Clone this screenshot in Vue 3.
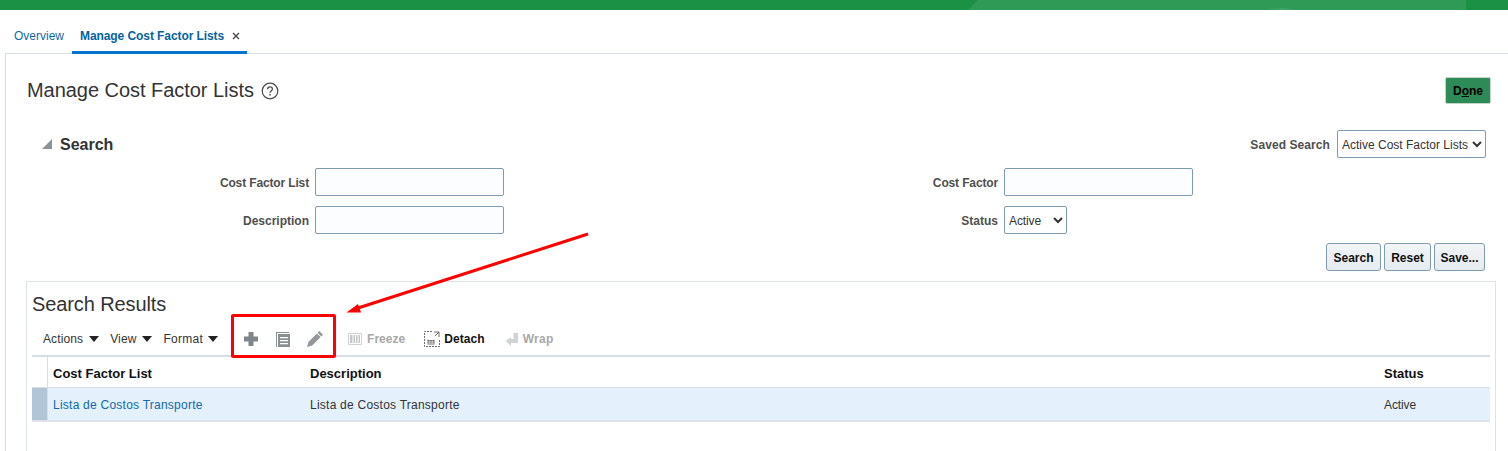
<script setup>
const columns = [
  { label: 'Cost Factor List', cls: 'c1' },
  { label: 'Description', cls: 'c2' },
  { label: 'Status', cls: 'c3' },
]
</script>

<template>
  <div class="page">
    <header class="brand">
      <div class="swoosh"></div>
      <div class="swoosh2"></div>
    </header>
    <nav class="tabs">
      <a class="tab">Overview</a>
      <a class="tab active">Manage Cost Factor Lists<svg class="close" width="8" height="8" viewBox="0 0 8 8"><path d="M1 1l6 6M7 1L1 7" stroke="#444" stroke-width="1.300" fill="none" /></svg></a>
    </nav>
    <main class="panel">
      <div class="title-row">
        <h1>Manage Cost Factor Lists</h1>
        <svg class="help" width="18" height="18" viewBox="0 0 18 18">
          <circle cx="9" cy="9" r="7.800" fill="none" stroke="#4a4a4a" stroke-width="1.200" />
          <path d="M6.600 7.200c0-1.500 1.100-2.300 2.400-2.300s2.400.8 2.400 2.100c0 1.900-2.400 1.900-2.400 3.800" fill="none" stroke="#4a4a4a" stroke-width="1.300" />
          <rect x="8.300" y="12" width="1.400" height="1.500" fill="#4a4a4a" />
        </svg>
        <button class="done">D<u>o</u>ne</button>
      </div>

      <div class="search-head">
        <div class="disclose-wrap">
          <svg class="disclose" width="12" height="12" viewBox="0 0 12 12"><path d="M11 1v10H1z" fill="#8d9296" /></svg>
          <h2>Search</h2>
        </div>
        <div class="saved">
          <label class="wide">Saved Search</label>
          <select class="sel saved-sel"><option>Active Cost Factor Lists</option></select>
        </div>
      </div>

      <div class="form">
        <label class="tight">Cost Factor List</label>
        <input class="inp" />
        <label class="tight">Cost Factor</label>
        <input class="inp" />
        <label>Description</label>
        <input class="inp" />
        <label>Status</label>
        <select class="sel status-sel"><option>Active</option></select>
      </div>

      <div class="actions">
        <button class="btn b-search">Search</button>
        <button class="btn b-reset">Reset</button>
        <button class="btn b-save">Save...</button>
      </div>

      <section class="results">
        <h2 class="results-title">Search Results</h2>
        <div class="toolbar">
          <span class="menu">Actions <i class="tri"></i></span>
          <span class="menu">View <i class="tri"></i></span>
          <span class="menu m-format">Format <i class="tri"></i></span>
          <span class="icons">
            <svg class="i-add" width="14" height="14" viewBox="0 0 14 14"><path d="M4.500 0h5v4.500H14v5H9.500V14h-5V9.500H0v-5h4.500z" fill="#7f8588" /></svg>
            <svg class="i-copy" width="14" height="15" viewBox="0 0 14 15">
              <path d="M0 0h13v1H1v14H0z" fill="#8a8f92" />
              <path d="M2 2h12v13H2z" fill="#8a8f92" />
              <path d="M4 5h8v1.300H4zM4 8h8v1.300H4zM4 11h8v1.300H4z" fill="#fff" />
            </svg>
            <svg class="i-edit" width="16" height="16" viewBox="0 0 16 16">
              <path d="M12.300 0L16 3.700l-1.700 1.700-3.700-3.700zM9.900 2.400l3.700 3.700-8.300 8.300L0 16l1.600-5.300z" fill="#93989b" />
            </svg>
          </span>
          <span class="tool off t-freeze">
            <svg width="14" height="14" viewBox="0 0 14 14">
              <path d="M.5 1.500h13v11H.5z" fill="none" stroke="#cfd2d4" />
              <path d="M2 3h2.500v8H2zM5.500 3H7v8H5.500zM8 3h1.500v8H8zM10.500 3H12v8h-1.500z" fill="#c4c7c9" />
            </svg>
            Freeze
          </span>
          <span class="tool t-detach">
            <svg width="16" height="16" viewBox="0 0 16 16">
              <path d="M8 .5H.5v15h15V8" fill="none" stroke="#6b6b6b" stroke-dasharray="2 1" />
              <path d="M10 1h5v5M15 1l-4 4" fill="none" stroke="#6b6b6b" />
              <path d="M3.500 9h7v4.500h-7z" fill="#5a5a5a" />
              <path d="M3.500 10.800h7M3.500 12.200h7M5.800 9v4.500M8.200 9v4.500" stroke="#fff" stroke-width=".6" />
            </svg>
            Detach
          </span>
          <span class="tool off t-wrap">
            <svg width="13" height="14" viewBox="0 0 13 14"><path d="M8.500 1H13v10H6v3L.5 9 6 5v2h2.500z" fill="#d0d3d5" /></svg>
            Wrap
          </span>
        </div>

        <div class="table">
          <div class="row head">
            <div class="rh"></div>
            <div v-for="c in columns" :key="c.label" class="cell" :class="c.cls">{{ c.label }}</div>
          </div>
          <div class="row body">
            <div class="rh"></div>
            <div class="cell c1"><a>Lista de Costos Transporte</a></div>
            <div class="cell c2">Lista de Costos Transporte</div>
            <div class="cell c3 plain">Active</div>
          </div>
        </div>
      </section>
    </main>

    <div class="red-box"></div>
    <svg class="arrow" width="250" height="85" viewBox="0 0 250 85">
      <path d="M243 2L13 76" stroke="#ff0000" stroke-width="3" fill="none" />
      <path d="M1.500 80.500L13 72l3 8.500z" fill="#ff0000" />
    </svg>
  </div>
</template>

<style>
html, body { margin: 0; background: #fff; overflow: hidden; }
</style>

<style scoped>
.page { position: relative; width: 1508px; height: 451px; overflow: hidden; font-family: "Liberation Sans", Arial, sans-serif; font-size: 12px; color: #333; background: #fff; }
.brand { position: relative; height: 10px; background: #1a9145; overflow: hidden; }
.swoosh { position: absolute; left: 968px; top: 0; width: 498px; height: 10px; background: #2f9a56; clip-path: polygon(10px 0, 100% 0, 100% 100%, 0 100%); }
.swoosh2 { position: absolute; left: 1262px; top: 8px; width: 38px; height: 12px; background: #3ca363; border-radius: 50%; }
.tabs { display: flex; height: 43px; position: relative; z-index: 1; padding-left: 6px; box-sizing: border-box; }
.tab { display: flex; align-items: center; padding: 15px 8px 8px; color: #0f6aa8; font-size: 12px; box-sizing: border-box; height: 44px; }
.tab.active { width: 175px; font-weight: bold; color: #04639f; border-bottom: 3px solid #0572ce; padding-bottom: 5px; letter-spacing: -.08px; white-space: nowrap; }
.close { margin-left: 8px; flex: none; }
.panel { margin-left: 5px; height: 398px; border-left: 1px solid #d6dfe6; border-top: 1px solid #d6dfe6; box-sizing: border-box; }
.title-row { display: flex; align-items: center; height: 73px; padding-left: 21px; padding-right: 17px; }
h1 { margin: 0; font-size: 20px; font-weight: normal; color: #333; letter-spacing: -.04px; }
.help { margin-left: 7px; }
.done { margin-left: auto; width: 46px; height: 27px; padding: 1px 0 0; background: #2e8b57; border: 1px solid #c5d5c9; border-radius: 2px; font: bold 12px "Liberation Sans", Arial, sans-serif; color: #000; }
.search-head { display: flex; justify-content: space-between; align-items: center; height: 30px; padding-left: 35px; padding-right: 22px; margin-top: 2px; margin-bottom: 9px; }
.disclose-wrap { display: flex; align-items: center; gap: 7px; margin-top: 2px; }
.disclose { margin-top: -2px; }
.search-head h2 { margin: 0; font-size: 16px; font-weight: bold; color: #333; }
.saved { display: flex; align-items: center; gap: 7px; }
label { font-weight: bold; color: #4f4f4f; font-size: 12px; text-align: right; padding-top: 1px; }
label.tight { letter-spacing: -.14px; }
label.wide { letter-spacing: .08px; }
.sel { height: 28px; box-sizing: border-box; background: #fff; border: 1px solid #7f9bae; border-radius: 2px; padding: 1px 0 0; font: 12px "Liberation Sans", Arial, sans-serif; color: #333; }
.saved-sel { width: 149px; }
.status-sel { width: 63px; letter-spacing: -.1px; }
.form { display: grid; grid-template-columns: 303px 189px 488px 189px; column-gap: 6px; row-gap: 10px; align-items: center; }
.inp { width: 189px; height: 28px; box-sizing: border-box; background: #fbfdff; border: 1px solid #7f9bae; border-radius: 2px; padding: 0; }
.actions { display: flex; justify-content: flex-end; gap: 3px; padding-right: 23px; margin-top: 9px; }
.btn { height: 28px; padding: 1px 0 0; background: linear-gradient(#f3f5f7, #e6ebef); border: 1px solid #7f9bae; border-radius: 3px; font: bold 12px "Liberation Sans", Arial, sans-serif; color: #111; }
.b-search { width: 55px; }
.b-reset { width: 47px; }
.b-save { width: 51px; }
.results { margin-left: 20px; margin-top: 10px; width: 1470px; height: 180px; border: 1px solid #dde3e8; border-bottom: 0; box-sizing: border-box; padding-left: 5px; padding-right: 5px; }
.results-title { margin: 0; padding-top: 11px; height: 33px; box-sizing: border-box; font-size: 20px; line-height: 22px; font-weight: normal; color: #333; letter-spacing: -.1px; }
.toolbar { display: flex; align-items: center; height: 40px; padding: 8px 0 0 11px; box-sizing: border-box; }
.menu { display: inline-flex; align-items: center; gap: 6px; color: #333; margin-right: 11px; letter-spacing: .12px; }
.m-format { letter-spacing: .25px; gap: 5px; margin-right: 0; }
.tri { width: 0; height: 0; border-left: 5px solid transparent; border-right: 5px solid transparent; border-top: 6px solid #222; }
.icons { display: flex; align-items: center; margin-left: 26px; }
.i-copy { margin-left: 18px; }
.i-edit { margin-left: 17px; }
.tool { display: inline-flex; align-items: center; font-weight: bold; color: #111; letter-spacing: .05px; }
.tool.off { color: #a8a8a8; }
.t-freeze { margin-left: 25px; gap: 5px; }
.t-detach { margin-left: 19px; gap: 4px; }
.t-wrap { margin-left: 20px; gap: 5px; letter-spacing: .3px; }
.table { border-top: 2px solid #d6dfe6; }
.row { display: flex; align-items: stretch; box-sizing: border-box; }
.rh { width: 15px; border-right: 1px solid #d6dfe6; flex: none; }
.cell { display: flex; align-items: center; box-sizing: border-box; padding-left: 5px; }
.c1 { width: 257px; }
.c2 { width: 1074px; }
.c3 { flex: 1; }
.head { height: 31px; font-size: 13px; font-weight: bold; color: #111; border-bottom: 1px solid #d6dfe6; }
.head .cell { padding-top: 2px; }
.body { background: #e4f1fd; border-bottom: 2px solid #dde3e8; height: 34px; letter-spacing: .24px; }
.body .cell { padding-top: 2px; }
.body .plain { letter-spacing: -.1px; }
.body .rh { background: #b1c5d6; }
.body a { color: #0f6aa8; }
.red-box { position: absolute; left: 231px; top: 314px; width: 105px; height: 44px; box-sizing: border-box; border: 3px solid #ff0000; border-radius: 2px; }
.arrow { position: absolute; left: 345px; top: 232px; }
</style>
